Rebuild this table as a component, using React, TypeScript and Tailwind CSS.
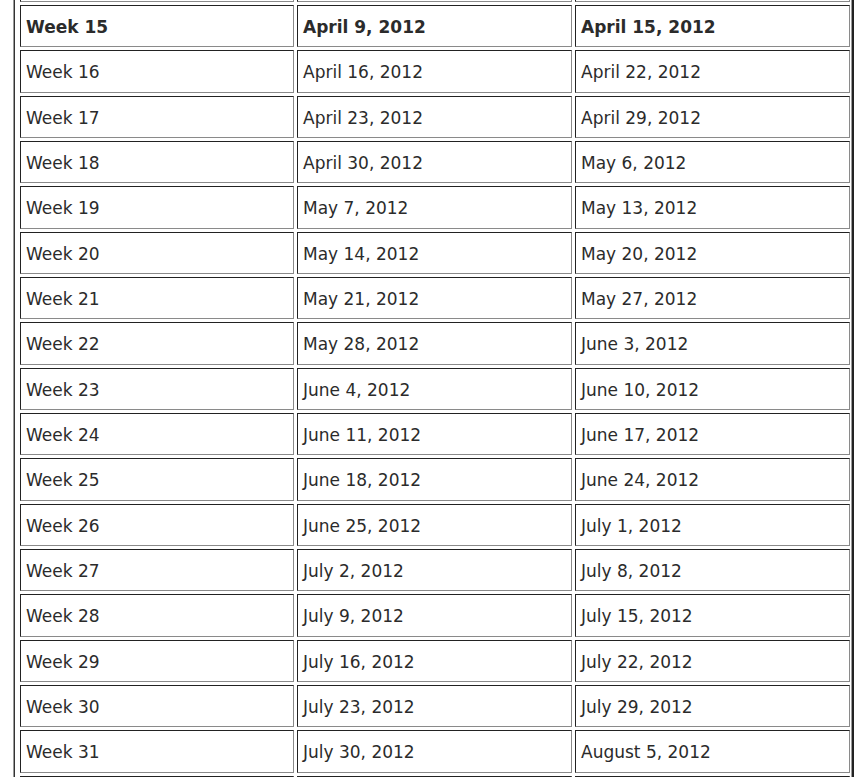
import React from "react";

const MONTHS = [
  "January", "February", "March", "April", "May", "June",
  "July", "August", "September", "October", "November", "December",
];

function fmt(d: Date) {
  return `${MONTHS[d.getMonth()]} ${d.getDate()}, ${d.getFullYear()}`;
}

// weeks 14..32; 14 and 32 only peek in at the edges, week 15 is highlighted
const rows = Array.from({ length: 19 }, (_, i) => {
  const week = 14 + i;
  const start = new Date(2012, 3, 2 + i * 7);
  const end = new Date(2012, 3, 8 + i * 7);
  return { week, start: fmt(start), end: fmt(end), edge: week === 14 || week === 32 };
});

function Cell({ children, bold }: { children?: React.ReactNode; bold?: boolean }) {
  return (
    <div
      className={
        "flex items-center h-[42.33px] pl-[5px] pt-[3px] border border-t-[#222] border-l-[#222] border-b-[#8a8a8a] border-r-[#8a8a8a] whitespace-nowrap " +
        (bold ? "font-bold" : "font-normal")
      }
    >
      {children}
    </div>
  );
}

export default function App() {
  return (
    <div className="h-[777px] w-[862px] overflow-hidden bg-white font-['DejaVu_Sans',Verdana,sans-serif] text-[17px] text-[#2b2b2b]">
      <div className="ml-[13px] w-[841px] -mt-[40.33px] border-l border-l-[#9a9a9a] border-r-2 border-r-[#222]">
        <div className="grid grid-cols-[274px_275px_275px] gap-x-[3px] gap-y-[3px] pl-[5px] pr-[1px] border-l border-l-[#333] border-r border-r-[#9a9a9a]">
          {rows.map((r) => (
            <React.Fragment key={r.week}>
              <Cell bold={r.week === 15}>{r.edge ? null : `Week ${r.week}`}</Cell>
              <Cell bold={r.week === 15}>{r.edge ? null : r.start}</Cell>
              <Cell bold={r.week === 15}>{r.edge ? null : r.end}</Cell>
            </React.Fragment>
          ))}
        </div>
      </div>
    </div>
  );
}
